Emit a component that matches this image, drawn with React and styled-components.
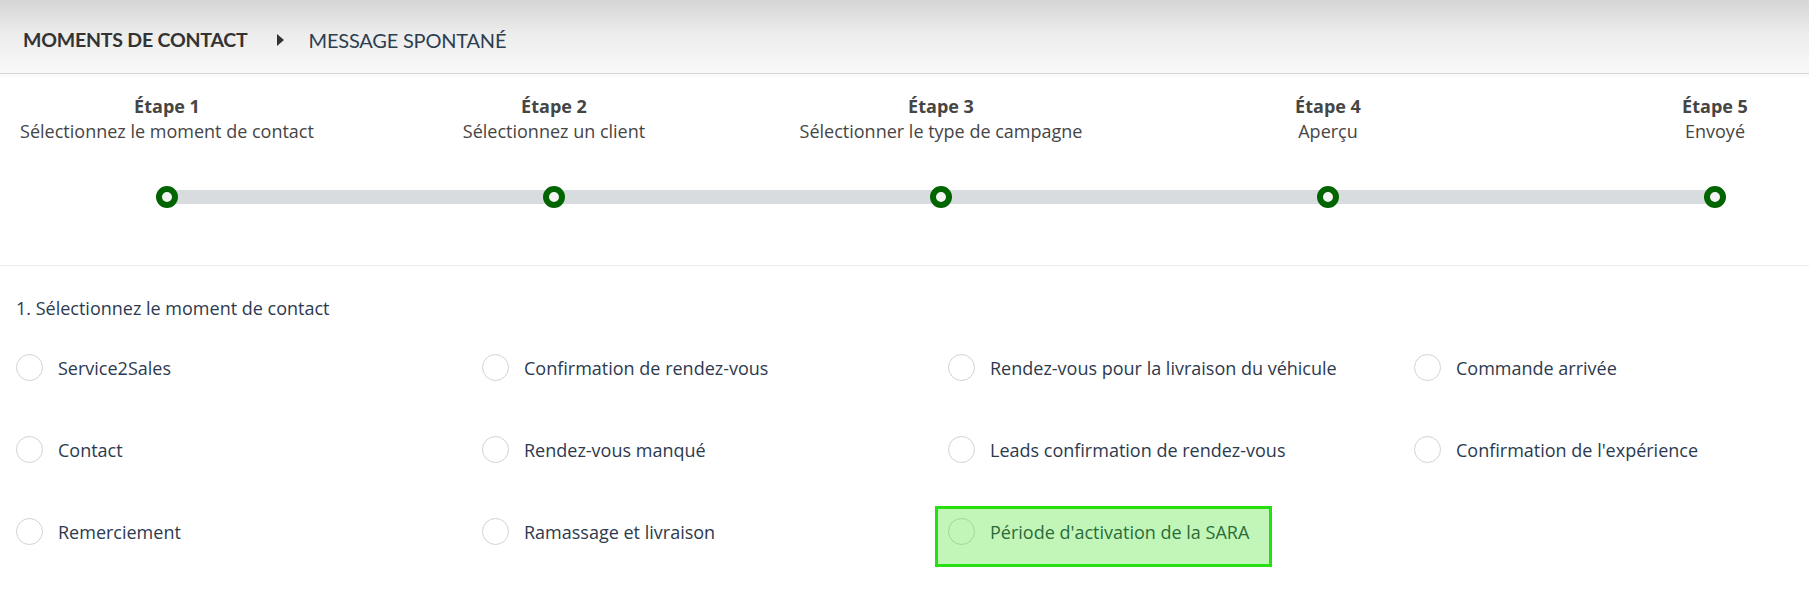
import React from 'react';
import styled, { createGlobalStyle } from 'styled-components';

const GlobalStyle = createGlobalStyle`
    html, body {
        margin: 0;
        padding: 0;
        background: #ffffff;
        overflow: hidden;
    }
    body {
        font-family: 'Open Sans', 'Liberation Sans', Arial, sans-serif;
        color: #2c3a4f;
    }
`

const Page = styled.div`
    width: 1809px;
    height: 593px;
`

const Header = styled.header`
    height: 74px;
    box-sizing: border-box;
    padding: 6px 0 0 23px;
    display: flex;
    align-items: center;
    background: linear-gradient(to bottom, #d5d5d5 0%, #ececec 45%, #f9f9f9 100%);
    border-bottom: 1px solid #d6d6d6;
    box-shadow: 0 2px 4px rgba(0, 0, 0, 0.03);
`

const Crumb = styled.span`
    font-family: 'Lato', 'Open Sans', sans-serif;
    font-size: ${({ $current }) => ($current ? '20px' : '19.5px')};
    letter-spacing: -0.2px;
    font-weight: ${({ $current }) => ($current ? 400 : 700)};
    color: ${({ $current }) => ($current ? '#2c3e50' : '#333333')};
`

const CrumbArrow = styled.span`
    width: 0;
    height: 0;
    margin: 0 25px 0 29px;
    border-top: 6px solid transparent;
    border-bottom: 6px solid transparent;
    border-left: 7px solid #333333;
`

const StepsSection = styled.section`
    padding: 20px 0 57px 0;
    border-bottom: 1px solid #ececec;
`

const StepsGrid = styled.div`
    display: grid;
    grid-template-columns: repeat(5, 334px);
    column-gap: 53px;
`

const Step = styled.div`
    text-align: center;
    font-size: 18px;
    line-height: 25px;
    color: #454545;
    white-space: nowrap;
`

const StepTitle = styled.div`
    font-weight: 700;
`

const StepText = styled.div`
    font-weight: 400;
`

const Track = styled.div`
    margin: 42px 0 0 156px;
    width: 1570px;
    height: 22px;
    display: flex;
    justify-content: space-between;
    align-items: center;
    background: linear-gradient(to bottom, transparent 4px, #d8dcdf 4px, #d8dcdf 18px, transparent 18px)
        11px 0 / calc(100% - 22px) 100% no-repeat;
`

const Dot = styled.span`
    width: 22px;
    height: 22px;
    box-sizing: border-box;
    border-radius: 50%;
    border: 6px solid #006400;
    background: #f4f4f4;
`

const OptionsSection = styled.section`
    padding: 30px 16px 0 16px;
`

const SectionTitle = styled.div`
    font-size: 18px;
    line-height: 25px;
    color: #2c3a4f;
    margin-bottom: 33px;
`

const OptionsGrid = styled.div`
    display: grid;
    grid-template-columns: repeat(4, 466px);
    row-gap: 55px;
`

const Option = styled.label`
    position: relative;
    display: flex;
    align-items: center;
    gap: 15px;
    height: 27px;
    font-size: 18px;
    color: #2c3a4f;
    white-space: nowrap;
    cursor: pointer;

    ${({ $highlight }) => $highlight && `
        &::after {
            content: '';
            position: absolute;
            top: -12px;
            left: -13px;
            width: 337px;
            height: 61px;
            box-sizing: border-box;
            border: 3px solid #26df0e;
            background: rgba(40, 225, 10, 0.29);
            pointer-events: none;
        }
    `}
`

const Radio = styled.span`
    flex: 0 0 auto;
    width: 27px;
    height: 27px;
    box-sizing: border-box;
    border-radius: 50%;
    border: 1px solid #d2d2d2;
    background: #ffffff;
`

const steps = [
    { title: 'Étape 1', text: 'Sélectionnez le moment de contact' },
    { title: 'Étape 2', text: 'Sélectionnez un client' },
    { title: 'Étape 3', text: 'Sélectionner le type de campagne' },
    { title: 'Étape 4', text: 'Aperçu' },
    { title: 'Étape 5', text: 'Envoyé' },
];

const options = [
    { label: 'Service2Sales' },
    { label: 'Confirmation de rendez-vous' },
    { label: 'Rendez-vous pour la livraison du véhicule' },
    { label: 'Commande arrivée' },
    { label: 'Contact' },
    { label: 'Rendez-vous manqué' },
    { label: 'Leads confirmation de rendez-vous' },
    { label: "Confirmation de l'expérience" },
    { label: 'Remerciement' },
    { label: 'Ramassage et livraison' },
    { label: "Période d'activation de la SARA", highlight: true },
];

function App() {
    return (
        <Page>
            <GlobalStyle/>
            <Header>
                <Crumb>MOMENTS DE CONTACT</Crumb>
                <CrumbArrow/>
                <Crumb $current>MESSAGE SPONTANÉ</Crumb>
            </Header>
            <StepsSection>
                <StepsGrid>
                    {steps.map((s) => (
                        <Step key={s.title}>
                            <StepTitle>{s.title}</StepTitle>
                            <StepText>{s.text}</StepText>
                        </Step>
                    ))}
                </StepsGrid>
                <Track>
                    {steps.map((s) => <Dot key={s.title}/>)}
                </Track>
            </StepsSection>
            <OptionsSection>
                <SectionTitle>1. Sélectionnez le moment de contact</SectionTitle>
                <OptionsGrid>
                    {options.map((o) => (
                        <Option key={o.label} $highlight={o.highlight}>
                            <Radio/>
                            <span>{o.label}</span>
                        </Option>
                    ))}
                </OptionsGrid>
            </OptionsSection>
        </Page>
    );
}

export default App;
